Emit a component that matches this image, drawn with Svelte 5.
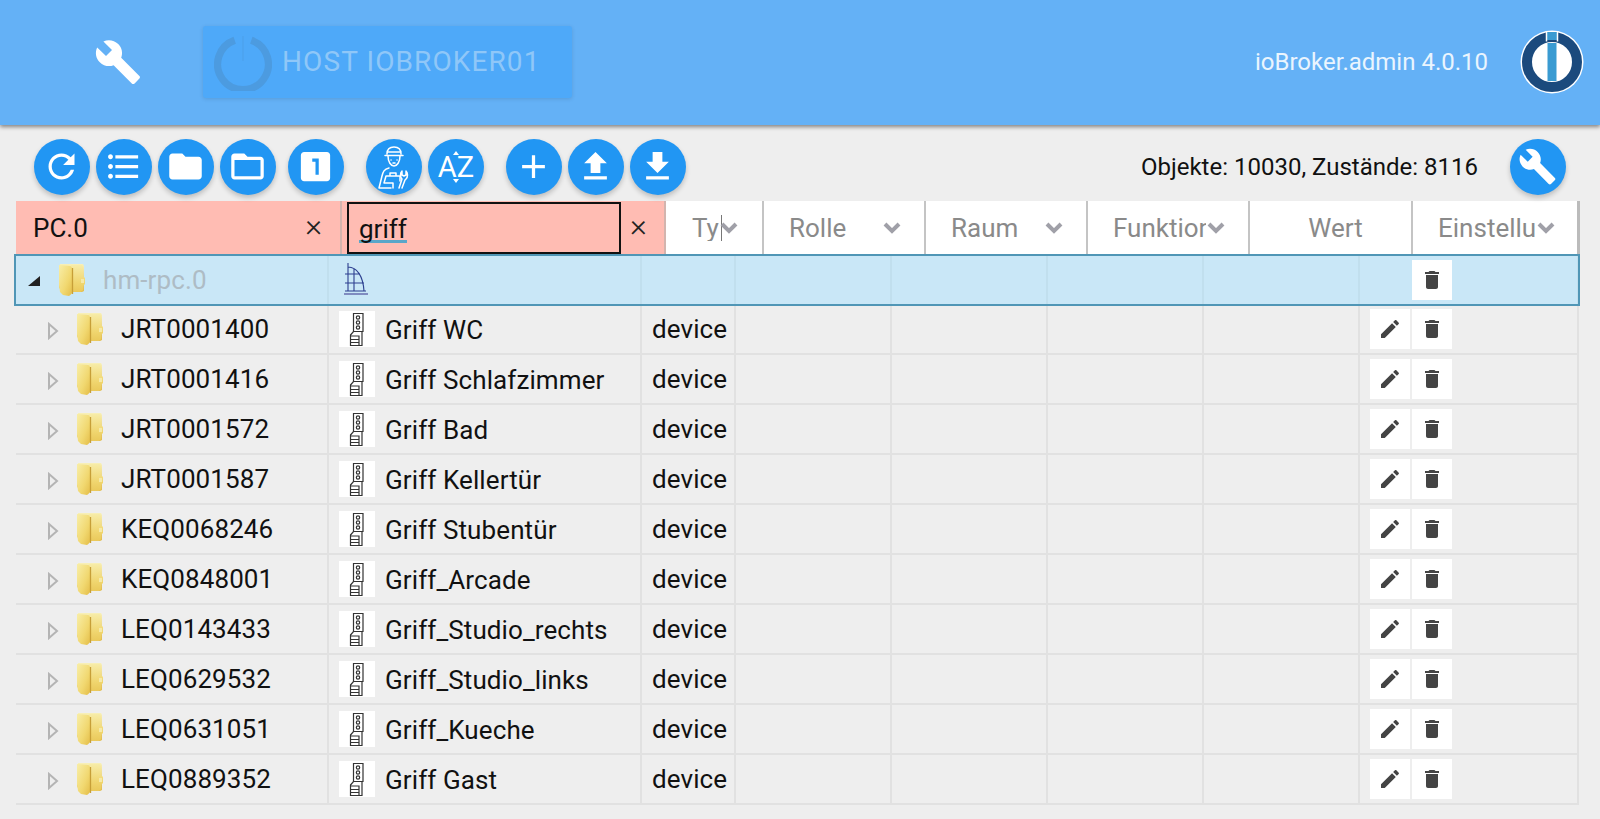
<script>
  const rows = [
    ['JRT0001400', 'Griff WC'],
    ['JRT0001416', 'Griff Schlafzimmer'],
    ['JRT0001572', 'Griff Bad'],
    ['JRT0001587', 'Griff Kellertür'],
    ['KEQ0068246', 'Griff Stubentür'],
    ['KEQ0848001', 'Griff_Arcade'],
    ['LEQ0143433', 'Griff_Studio_rechts'],
    ['LEQ0629532', 'Griff_Studio_links'],
    ['LEQ0631051', 'Griff_Kueche'],
    ['LEQ0889352', 'Griff Gast']
  ]

  const wrench = 'M22.7 19l-9.1-9.1c.9-2.3.4-5-1.5-6.9-2-2-5-2.4-7.4-1.3L9 6 6 9 1.6 4.7C.4 7.1.9 10.1 2.9 12.1c1.9 1.9 4.6 2.4 6.9 1.5l9.1 9.1c.4.4 1 .4 1.4 0l2.3-2.3c.5-.4.5-1.1.1-1.4z'
  const edit = 'M3 17.25V21h3.75L17.81 9.94l-3.75-3.75L3 17.25zM20.71 7.04c.39-.39.39-1.02 0-1.41l-2.34-2.34c-.39-.39-1.02-.39-1.41 0l-1.83 1.83 3.75 3.75 1.83-1.83z'
  const trash = 'M6 19c0 1.1.9 2 2 2h8c1.1 0 2-.9 2-2V7H6v12zM19 4h-3.5l-1-1h-5l-1 1H5v2h14V4z'

  const firstGroup = [
    'M17.65 6.35C16.2 4.9 14.21 4 12 4c-4.42 0-7.99 3.58-7.99 8s3.57 8 7.99 8c3.73 0 6.84-2.55 7.73-6h-2.08c-.82 2.33-3.04 4-5.65 4-3.31 0-6-2.69-6-6s2.69-6 6-6c1.66 0 3.14.69 4.22 1.78L13 11h7V4l-2.35 2.35z',
    'M4 10.5c-.83 0-1.5.67-1.5 1.5s.67 1.5 1.5 1.5 1.5-.67 1.5-1.5-.67-1.5-1.5-1.5zm0-6c-.83 0-1.5.67-1.5 1.5S3.17 7.5 4 7.5 5.5 6.83 5.5 6 4.83 4.5 4 4.5zm0 12c-.83 0-1.5.68-1.5 1.5s.68 1.5 1.5 1.5 1.5-.68 1.5-1.5-.67-1.5-1.5-1.5zM7 19h14v-2H7v2zm0-6h14v-2H7v2zm0-8v2h14V5H7z',
    'M10 4H4c-1.1 0-1.99.9-1.99 2L2 18c0 1.1.9 2 2 2h16c1.1 0 2-.9 2-2V8c0-1.1-.9-2-2-2h-8l-2-2z',
    'M20 6h-8l-2-2H4c-1.1 0-1.99.9-1.99 2L2 18c0 1.1.9 2 2 2h16c1.1 0 2-.9 2-2V8c0-1.1-.9-2-2-2zm0 12H4V8h16v10z'
  ]
  const one = 'M19 3H5c-1.1 0-2 .9-2 2v14c0 1.1.9 2 2 2h14c1.1 0 2-.9 2-2V5c0-1.1-.9-2-2-2zm-5 14h-2V9h-2V7h4v10z'
  const lastGroup = [
    'M19 13h-6v6h-2v-6H5v-2h6V5h2v6h6v2z',
    'M9 16h6v-6h4l-7-7-7 7h4zm-4 2h14v2H5z',
    'M19 9h-4V3H9v6H5l7 7 7-7zM5 18v2h14v-2H5z'
  ]

  const columns = [
    { label: 'Ty', cls: 'typ', chevron: true },
    { label: 'Rolle', chevron: true },
    { label: 'Raum', chevron: true },
    { label: 'Funktion', chevron: true },
    { label: 'Wert', cls: 'wert' },
    { label: 'Einstellungen', cls: 'settings', chevron: true }
  ]
</script>

{#snippet folder()}
  <svg class="folder" viewBox="0 0 28 32" aria-hidden="true">
    <path d="M2 0h23l1 2v25l-2 1H8l-5-1-2-4z" fill="url(#folderBack)" />
    <path d="M13 1h11l1 2v9l2 2v6l-2 2v4l-2 2H15l-2 2z" fill="url(#folderRight)" />
    <path d="M1 1l11 1c1 0 2 1 2 3v22c0 2-1 4-3 5l-6-1-3-3-1-7z" fill="url(#folderFront)" />
    <path d="M14.500 4v26" stroke="#c79f38" stroke-width="1.300" />
    <path d="M23 15h3v4h-3z" fill="#f5e9a8" />
  </svg>
{/snippet}

{#snippet handle()}
  <span class="device-icon">
    <svg viewBox="0 0 36 36" width="36" height="36" aria-hidden="true">
      <g fill="none" stroke="#333" stroke-width="1.200">
        <path d="M14.500 2.500h9.500v18h-9.500z" />
        <circle cx="19" cy="6.500" r="1.700" />
        <circle cx="19" cy="11.500" r="1.700" />
        <circle cx="19" cy="16.500" r="1.700" />
        <path d="M11.500 24l3-3.500h8.500v14h-11.500zM11.500 25h8.500v9.500M11.500 28.500h8.500M11.500 31.500h8.500" />
      </g>
    </svg>
  </span>
{/snippet}

{#snippet actions(showEdit)}
  <div class="actions" class:no-edit={!showEdit}>
    {#if showEdit}
      <span class="action"><svg viewBox="0 0 24 24" aria-hidden="true"><path d={edit} /></svg></span>
    {/if}
    <span class="action"><svg viewBox="0 0 24 24" aria-hidden="true"><path d={trash} /></svg></span>
  </div>
{/snippet}

<svg class="defs" width="0" height="0" aria-hidden="true">
  <defs>
    <linearGradient id="folderBack" x1="0" y1="0" x2="0" y2="1">
      <stop offset="0" stop-color="#f8f0b8" />
      <stop offset="1" stop-color="#e2bc4a" />
    </linearGradient>
    <linearGradient id="folderRight" x1="0" y1="0" x2="0" y2="1">
      <stop offset="0" stop-color="#f7eca8" />
      <stop offset="0.6" stop-color="#f0d670" />
      <stop offset="1" stop-color="#e9c656" />
    </linearGradient>
    <linearGradient id="folderFront" x1="0" y1="0" x2="1" y2="1">
      <stop offset="0" stop-color="#f8eea8" />
      <stop offset="0.6" stop-color="#f1d870" />
      <stop offset="1" stop-color="#e4bd48" />
    </linearGradient>
  </defs>
</svg>

<header class="header">
  <svg class="header-wrench" viewBox="0 0 24 24" aria-hidden="true"><path d={wrench} /></svg>
  <div class="host">
    <svg class="power" viewBox="0 0 56 56" aria-hidden="true">
      <path d="M20 7a24.500 24.500 0 1 0 16 0" fill="none" stroke="#4c9be0" stroke-width="7" />
      <path d="M28 3v24" stroke="#4c9be0" stroke-width="1" opacity="0.6" />
    </svg>
    <span class="host-name">HOST IOBROKER01</span>
  </div>
  <span class="version">ioBroker.admin 4.0.10</span>
  <svg class="logo" viewBox="0 0 64 64" aria-hidden="true">
    <circle cx="32" cy="32" r="31.500" fill="#fff" />
    <circle cx="32" cy="32" r="25" fill="#fff" stroke="#1b4a7d" stroke-width="10" />
    <rect x="27" y="2" width="10" height="8" fill="#3a9bd2" />
    <rect x="27.500" y="13" width="9" height="38" fill="#3a9bd2" />
    <path d="M26.500 1.500v10M37.500 1.500v10" stroke="#fff" stroke-width="1.500" />
  </svg>
</header>

<div class="toolbar">
  <div class="group">
    {#each firstGroup as d}
      <span class="fab"><svg viewBox="0 0 24 24" aria-hidden="true"><path {d} /></svg></span>
    {/each}
  </div>
  <span class="fab one"><svg viewBox="0 0 24 24" aria-hidden="true"><path d={one} /></svg></span>
  <div class="group expert-group">
    <span class="fab">
      <svg class="expert" viewBox="0 0 32 43" aria-hidden="true">
        <g fill="none" stroke="#fff" stroke-width="1.500" stroke-linecap="round" stroke-linejoin="round">
          <path d="M9 8c0-5 3-7 7-7s7 2 7 7M7 9.500h18M9 6h14" />
          <path d="M10 10c0 6 3 10 6 10s6-4 6-10" />
          <path d="M13 14h.1M19 14h.1M15 17h2" />
          <path d="M11 22c-5 1-6 4-7 8L1 42h12" />
          <path d="M8 30h14v5M8 30l-2 7M12 30v-3h6v3M6 37h9M15 37v5" />
          <path d="M21 42l3-9c-2-2-2-6 0-8v4l2 1 2-1v-4c2 2 2 6 0 8l-1 1-3 8" />
        </g>
      </svg>
    </span>
    <span class="fab az">
      <svg class="az-arrows" viewBox="0 0 10 32" aria-hidden="true"><path d="M5 0l3 4H2zM5 32l3-4H2z" /></svg>
      <span>AZ</span>
    </span>
  </div>
  <div class="group add-group">
    {#each lastGroup as d}
      <span class="fab"><svg viewBox="0 0 24 24" aria-hidden="true"><path {d} /></svg></span>
    {/each}
  </div>
  <span class="stats">Objekte: 10030, Zustände: 8116</span>
  <span class="fab"><svg viewBox="0 0 24 24" aria-hidden="true"><path d={wrench} /></svg></span>
</div>

<main class="table">
  <div class="filters">
    <div class="filter active">
      <span class="filter-value">PC.0</span>
      <span class="clear">×</span>
    </div>
    <div class="filter active name">
      <span class="input"><span class="typed">griff</span></span>
      <span class="clear">×</span>
    </div>
    {#each columns as col}
      <div class="filter {col.cls ?? ''}">
        <span class="col-label">{col.label}</span>
        {#if col.chevron}
          <svg class="chevron" viewBox="0 0 20 14" aria-hidden="true"><path d="M3 3l7 7 7-7" /></svg>
        {/if}
      </div>
    {/each}
  </div>

  <div class="row selected">
    <div class="cell id root">
      <svg class="expander" viewBox="0 0 14 14" aria-hidden="true"><path d="M13 2v10H1z" fill="#222" /></svg>
      {@render folder()}
      <span class="root-name">hm-rpc.0</span>
    </div>
    <div class="cell name-cell">
      <svg class="homematic" viewBox="0 0 26 36" aria-hidden="true">
        <g fill="none" stroke="#2c3f8f" stroke-width="1.100">
          <path d="M5 1v28M5 5c9 0 15 9 16 24M2 12h15M2 21h19M11 7v22M2 29h21" />
          <path d="M1 32h24" stroke="#7f8cc0" stroke-width="2" />
        </g>
      </svg>
    </div>
    <div class="cell"></div><div class="cell"></div><div class="cell"></div><div class="cell"></div>
    <div class="cell"></div>
    <div class="cell">{@render actions(false)}</div>
  </div>

  {#each rows as [id, name]}
    <div class="row">
      <div class="cell id child">
        <svg class="expander small" viewBox="0 0 12 18" aria-hidden="true"><path d="M2 2l8 7-8 7z" fill="none" stroke="#b4b4b4" stroke-width="2" /></svg>
        {@render folder()}
        <span>{id}</span>
      </div>
      <div class="cell name-cell">
        {@render handle()}
        <span class="name-text">{name}</span>
      </div>
      <div class="cell type">device</div>
      <div class="cell"></div><div class="cell"></div><div class="cell"></div>
      <div class="cell"></div>
      <div class="cell">{@render actions(true)}</div>
    </div>
  {/each}
</main>

<style>
  :global(body) {
    background: #eeeeee;
    font-family: Roboto, "Liberation Sans", sans-serif;
    color: #111;
    overflow: hidden;
  }

  .defs {
    display: block;
    height: 0;
  }

  .header {
    display: flex;
    align-items: center;
    height: 125px;
    padding: 0 16px 2px 94px;
    box-sizing: border-box;
    background: #64b1f6;
    box-shadow: 0 2px 4px rgba(0, 0, 0, 0.45);
    position: relative;
  }

  .header-wrench {
    width: 48px;
    height: 48px;
    fill: #fff;
    flex: none;
  }

  .host {
    display: flex;
    align-items: center;
    gap: 10px;
    width: 369px;
    height: 72px;
    margin-left: 61px;
    padding-left: 11px;
    box-sizing: border-box;
    background: #4ea9f9;
    border-radius: 3px;
    box-shadow: 0 1px 4px rgba(0, 0, 0, 0.12);
  }

  .power {
    width: 58px;
    height: 58px;
    flex: none;
  }

  .host-name {
    font-size: 28px;
    letter-spacing: 1.1px;
    color: #8fc7f8;
  }

  .version {
    margin-left: auto;
    font-size: 24px;
    color: #eaf5fe;
  }

  .logo {
    width: 64px;
    height: 64px;
    margin-left: 32px;
    flex: none;
  }

  .toolbar {
    display: flex;
    align-items: center;
    height: 76px;
    padding: 8px 34px 0;
    box-sizing: border-box;
  }

  .group {
    display: flex;
    gap: 6px;
  }

  .fab {
    display: flex;
    align-items: center;
    justify-content: center;
    position: relative;
    width: 56px;
    height: 56px;
    flex: none;
    border-radius: 50%;
    background: #2196f3;
    box-shadow: 0 3px 5px rgba(0, 0, 0, 0.2);
  }

  .fab svg {
    width: 39px;
    height: 39px;
    margin: 0 1px 2px 0;
    fill: #fff;
  }

  .one {
    margin-left: 12px;
  }

  .expert-group {
    margin-left: 22px;
  }

  .add-group {
    margin-left: 22px;
  }

  .fab .expert {
    width: 32px;
    height: 43px;
    margin: 0;
    fill: none;
  }

  .az {
    font-size: 29px;
    color: #fff;
  }

  .fab .az-arrows {
    position: absolute;
    left: 23px;
    top: 12px;
    width: 10px;
    height: 32px;
    margin: 0;
  }

  .stats {
    margin-left: auto;
    margin-right: 32px;
    font-size: 24px;
    color: #111;
  }

  .table {
    margin-left: 16px;
    width: 1564px;
  }

  .filters {
    display: grid;
    grid-template-columns: 326px 324px 98px 162px 162px 162px 163px 167px;
    height: 54px;
    border-bottom: 1px solid #1f4f7a;
    box-sizing: border-box;
    background: #fff;
  }

  .filter {
    display: flex;
    align-items: center;
    min-width: 0;
    padding: 0 0 0 25px;
    border-right: 2px solid #c4c4c4;
    box-sizing: border-box;
    overflow: hidden;
    font-size: 26px;
    color: #8a8a8a;
  }

  .filter.active {
    padding: 0;
    background: #ffbcb3;
    color: #111;
    border-right-color: #d3b4ae;
  }

  .filter-value {
    flex: 1;
    padding-left: 17px;
  }

  .clear {
    margin-right: 18px;
    margin-bottom: 6px;
    font-size: 32px;
    line-height: 1;
    font-weight: 300;
    color: #222;
  }

  .name .clear {
    margin: 0 0 6px 9px;
  }

  .input {
    display: flex;
    align-items: center;
    width: 274px;
    height: 52px;
    margin-left: 5px;
    padding-left: 10px;
    box-sizing: border-box;
    border: 2.5px solid #111;
  }

  .typed {
    border-bottom: 3px solid #5aa6c9;
    line-height: 22px;
    padding-top: 5px;
    color: #111;
  }

  .col-label {
    flex: 1;
    min-width: 0;
    white-space: nowrap;
    overflow: hidden;
  }

  .chevron {
    width: 20px;
    height: 14px;
    flex: none;
    margin: 0 22px 0 0;
    fill: none;
    stroke: #a0a0a8;
    stroke-width: 4;
  }

  .typ {
    padding-left: 26px;
  }

  .typ .col-label {
    border-right: 1px solid #777;
    flex: none;
    width: 29px;
    height: 26px;
    line-height: 26px;
  }

  .typ .chevron {
    margin: 0 0 0 -3px;
  }

  .wert {
    justify-content: center;
    padding: 0 0 0 10px;
  }

  .wert .col-label {
    flex: none;
  }

  .settings {
    border-right: 3px solid #bbb;
  }

  .settings .chevron {
    margin: 0 16px 0 0;
  }

  .settings .col-label {
    flex: none;
    width: 98px;
  }

  .row {
    display: grid;
    grid-template-columns: 313px 313px 94px 156px 156px 156px 156px 219px;
    height: 50px;
    width: 1563px;
    box-sizing: border-box;
    border-bottom: 2px solid #e1e1e1;
    font-size: 26px;
    letter-spacing: 0.1px;
    white-space: nowrap;
  }

  .row.selected {
    width: 1564px;
    margin-left: -1px;
    padding-left: 1px;
    background: #c9e7f7;
    border-bottom: none;
    outline: 2px solid #5096b6;
    outline-offset: -1px;
    position: relative;
  }

  .cell {
    display: flex;
    align-items: center;
    min-width: 0;
    border-right: 2px solid #e1e1e1;
    box-sizing: border-box;
  }

  .selected .cell {
    border-right-color: #c1dfee;
  }

  .id {
    padding-bottom: 1px;
  }

  .root {
    padding-left: 11px;
  }

  .child {
    padding-left: 31px;
  }

  .expander {
    width: 14px;
    height: 14px;
    flex: none;
    margin: 2px 17px 0 0;
  }

  .expander.small {
    width: 12px;
    height: 18px;
    margin: 4px 17px 0 0;
  }

  .folder {
    width: 28px;
    height: 32px;
    flex: none;
    margin-right: 17px;
  }

  .root-name {
    color: #aebcc5;
  }

  .name-cell {
    gap: 10px;
    padding-left: 10px;
  }

  .name-text {
    padding-top: 1px;
  }

  .device-icon {
    display: block;
    width: 36px;
    height: 36px;
    flex: none;
    background: #fff;
  }

  .homematic {
    width: 26px;
    height: 36px;
    margin-left: 4px;
  }

  .type {
    padding-left: 10px;
  }

  .actions {
    display: flex;
    gap: 2px;
    padding-left: 10px;
  }

  .actions.no-edit {
    padding-left: 52px;
  }

  .action {
    display: flex;
    align-items: center;
    justify-content: center;
    width: 40px;
    height: 40px;
    background: #fff;
  }

  .action svg {
    width: 24px;
    height: 24px;
    fill: #444;
  }
</style>
